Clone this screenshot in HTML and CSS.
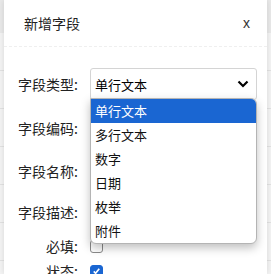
FILE: index.html
```html
<!DOCTYPE html>
<html lang="zh-CN">
<head>
    <meta charset="UTF-8">
    <meta name="viewport" content="width=device-width, initial-scale=1.0">
    <title>新增字段</title>
    <link rel="stylesheet" href="styles.css">
</head>
<body>
    <div class="modal">
        <div class="modal-header">
            <span class="modal-title">新增字段</span>
            <span class="close">x</span>
        </div>

        <div class="modal-body">
            <div class="row row-type">
                <label>字段类型:</label>
                <div class="select">
                    <span>单行文本</span>
                    <svg class="chevron" width="12" height="8" viewBox="0 0 12 8">
                        <path d="M1.5 1.5 L6 6 L10.5 1.5" fill="none" stroke="#000" stroke-width="2.2"/>
                    </svg>
                    <ul class="dropdown">
                        <li class="active">单行文本</li>
                        <li>多行文本</li>
                        <li>数字</li>
                        <li>日期</li>
                        <li>枚举</li>
                        <li>附件</li>
                    </ul>
                </div>
            </div>
            <div class="row row-code">
                <label>字段编码:</label>
                <div class="input"></div>
            </div>
            <div class="row row-name">
                <label>字段名称:</label>
                <div class="input"></div>
            </div>
            <div class="row row-desc">
                <label>字段描述:</label>
                <div class="input"></div>
            </div>
            <div class="row row-check">
                <label>必填:</label>
                <span class="checkbox"></span>
            </div>
            <div class="row row-check">
                <label>状态:</label>
                <span class="checkbox checked">
                    <svg width="12" height="12" viewBox="0 0 12 12">
                        <path d="M3 6.5 L5 8.5 L9 3.5" fill="none" stroke="#fff" stroke-width="1.8"/>
                    </svg>
                </span>
            </div>
        </div>
    </div>
</body>
</html>
```

FILE: styles.css
```css
/* General Reset */
* {
    margin: 0;
    padding: 0;
    box-sizing: border-box;
}

body {
    font-family: "Noto Sans CJK SC", "Noto Sans", sans-serif;
    color: #222;
    width: 271px;
    height: 274px;
    overflow: hidden;
    background:
        linear-gradient(#e9e9e9, #e9e9e9) 0 0 / 100% 33px no-repeat,
        repeating-linear-gradient(#f4f4f4 0, #f4f4f4 37px, #e2e2e2 37px, #e2e2e2 38px) 0 33px / 100% 100% no-repeat;
}

.modal {
    margin-left: 4px;
    width: 263px;
    height: 274px;
    background: white;
    box-shadow: 0 0 6px rgba(0, 0, 0, 0.12);
}

.modal-header {
    display: flex;
    justify-content: space-between;
    align-items: center;
    height: 47px;
    padding: 0 17px 0 20px;
    border-bottom: 1px dashed #efefef;
}

.modal-title {
    font-size: 14px;
}

.close {
    font-size: 14px;
    color: #333;
    font-family: "Liberation Sans", Arial, sans-serif;
}

.modal-body {
    padding: 21px 10px 0 0;
}

.row {
    display: flex;
    align-items: center;
}

.row label {
    width: 74px;
    text-align: right;
    margin-right: 12px;
    font-size: 14px;
    color: #222;
}

.row-type {
    margin-bottom: 12px;
}

.row-code {
    margin-bottom: 11px;
}

.row-name {
    margin-bottom: 9px;
}

.row-desc {
    margin-bottom: 8px;
}

.row-check {
    height: 20px;
    margin-bottom: 5px;
}

.select,
.input {
    position: relative;
    flex: 1;
    height: 32px;
    border: 1px solid #d4d4d4;
    border-radius: 3px;
    background: white;
}

.select {
    display: flex;
    align-items: center;
    justify-content: space-between;
    padding: 0 7px 0 4px;
    font-size: 13px;
    color: #000;
}

.dropdown {
    position: absolute;
    top: 29px;
    left: -1px;
    width: 167px;
    list-style: none;
    background: white;
    border: 1px solid #b4b4b4;
    border-radius: 0 6px 6px 6px;
    box-shadow: 0 4px 10px rgba(0, 0, 0, 0.25);
    overflow: hidden;
    z-index: 10;
}

.dropdown li {
    height: 24px;
    line-height: 24px;
    padding-left: 4px;
    font-size: 13px;
    color: #111;
}

.dropdown li.active {
    background-color: #1a66d2;
    color: white;
}

.checkbox {
    display: inline-flex;
    align-items: center;
    justify-content: center;
    width: 13px;
    height: 13px;
    border: 1px solid #8a8a8a;
    border-radius: 3px;
    background: white;
}

.checkbox.checked {
    background-color: #1a66d2;
    border-color: #1a66d2;
}
```
